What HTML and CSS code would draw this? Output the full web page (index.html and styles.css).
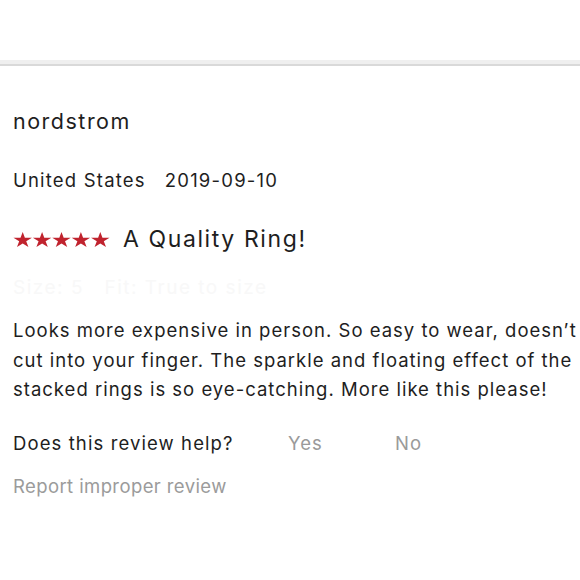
FILE: index.html
```html
<!DOCTYPE html>
<html>
<head>
<meta charset="utf-8">
<link rel="stylesheet" href="styles.css">
</head>
<body>
<div class="top"></div>
<div class="divider"></div>
<div class="review">
  <div class="author">nordstrom</div>
  <div class="meta"><span class="country">United States</span><span class="date">2019-09-10</span></div>
  <div class="title-row">
    <svg class="stars" width="97" height="15" viewBox="0 0 100 18.1" preserveAspectRatio="none" aria-label="5 stars">
      <g fill="#c0232e">
        <polygon points="10,0 12.25,6.91 19.51,6.91 13.63,11.18 15.88,18.09 10,13.82 4.12,18.09 6.37,11.18 0.49,6.91 7.75,6.91"/>
        <polygon transform="translate(20 0)" points="10,0 12.25,6.91 19.51,6.91 13.63,11.18 15.88,18.09 10,13.82 4.12,18.09 6.37,11.18 0.49,6.91 7.75,6.91"/>
        <polygon transform="translate(40 0)" points="10,0 12.25,6.91 19.51,6.91 13.63,11.18 15.88,18.09 10,13.82 4.12,18.09 6.37,11.18 0.49,6.91 7.75,6.91"/>
        <polygon transform="translate(60 0)" points="10,0 12.25,6.91 19.51,6.91 13.63,11.18 15.88,18.09 10,13.82 4.12,18.09 6.37,11.18 0.49,6.91 7.75,6.91"/>
        <polygon transform="translate(80 0)" points="10,0 12.25,6.91 19.51,6.91 13.63,11.18 15.88,18.09 10,13.82 4.12,18.09 6.37,11.18 0.49,6.91 7.75,6.91"/>
      </g>
    </svg>
    <span class="title">A Quality Ring!</span>
  </div>
  <div class="ghost">Size: 5 &nbsp; Fit: True to size</div>
  <p class="body">Looks more expensive in person. So easy to wear, doesn’t cut into your finger. The sparkle and floating effect of the stacked rings is so eye-catching. More like this please!</p>
  <div class="helpful">
    <span class="question">Does this review help?</span>
    <span class="vote yes">Yes</span>
    <span class="vote no">No</span>
  </div>
  <div class="report">Report improper review</div>
</div>
</body>
</html>
```
FILE: styles.css
```css
html, body {
  margin: 0;
  padding: 0;
  background: #fff;
  overflow: hidden;
}
body {
  font-family: Inter, "Noto Sans", sans-serif;
  color: #1e1e1e;
  width: 580px;
  height: 580px;
}
.top {
  height: 60px;
}
.divider {
  height: 4px;
  background: #efefef;
  border-bottom: 2px solid #d9d9d9;
}
.review {
  padding: 40px 0 0 13px;
}
.author {
  font-size: 21.5px;
  line-height: 30px;
  letter-spacing: 1.5px;
}
.meta {
  margin-top: 33px;
  font-size: 18.5px;
  line-height: 22px;
  letter-spacing: 1.2px;
}
.country {
  margin-right: 19px;
}
.title-row {
  margin-top: 34px;
  display: flex;
  align-items: center;
  gap: 13px;
  height: 28px;
}
.stars {
  display: block;
}
.title {
  font-size: 23px;
  line-height: 28px;
  letter-spacing: 1.6px;
}
.ghost {
  margin-top: 22px;
  font-size: 19px;
  line-height: 26px;
  letter-spacing: 1.5px;
  color: #f8f8f8;
}
.body {
  margin: 15px 0 0;
  width: 567px;
  font-size: 18.5px;
  line-height: 29.5px;
  letter-spacing: 1px;
}
.helpful {
  margin-top: 27px;
  display: flex;
  font-size: 18.5px;
  line-height: 22px;
  letter-spacing: 1.1px;
}
.question {
  width: 275px;
}
.vote {
  color: #9a9a9a;
}
.yes {
  width: 107px;
}
.report {
  margin-top: 21px;
  font-size: 18.5px;
  line-height: 22px;
  letter-spacing: 0.4px;
  color: #9b9b9b;
}
```
